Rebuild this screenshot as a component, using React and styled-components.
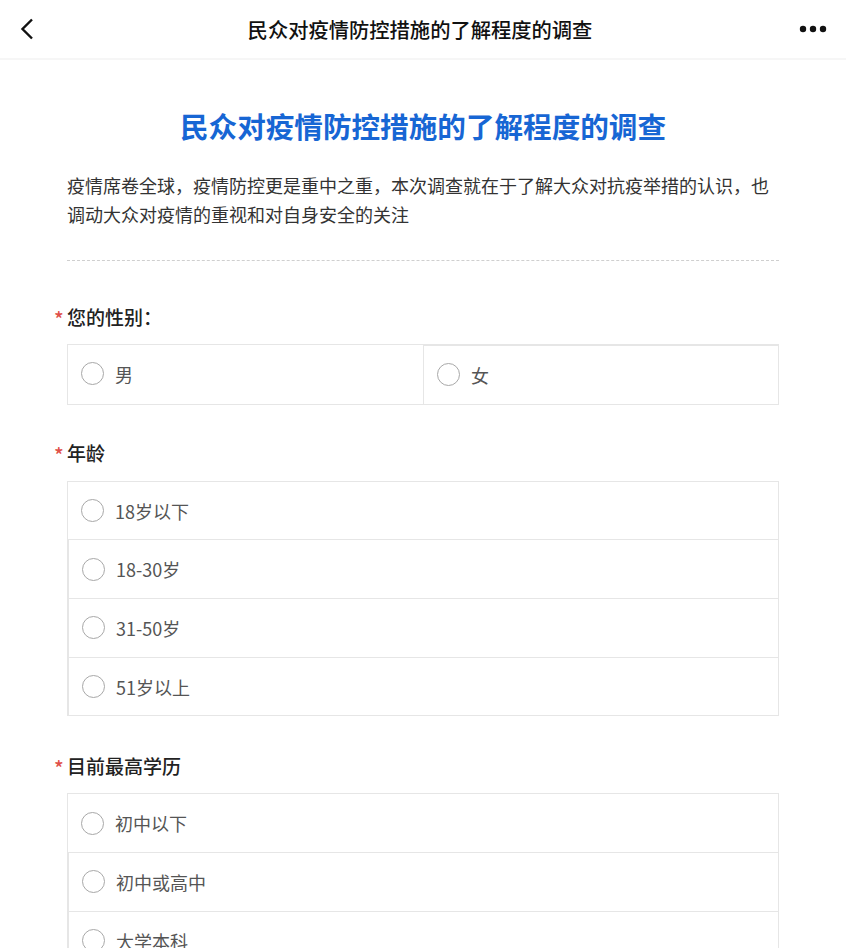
import React from "react";
import styled, { createGlobalStyle } from "styled-components";

const GlobalStyle = createGlobalStyle`
  body {
    margin: 0;
    background: #fff;
    font-family: "Noto Sans CJK SC", "Noto Sans", sans-serif;
  }
`;

const Header = styled.header`
  height: 60px;
  display: flex;
  align-items: center;
  justify-content: space-between;
  padding: 0 18px 0 12px;
  border-bottom: 2px solid #f6f6f6;
  box-sizing: border-box;
`;

const HeaderTitle = styled.h1`
  margin: 0;
  font-size: 20.3px;
  font-weight: 500;
  color: #111;
`;

const IconBtn = styled.div`
  width: 30px;
  height: 30px;
  display: flex;
  align-items: center;
  justify-content: center;
`;

const Main = styled.main`
  padding: 0 67px 40px;
`;

const Title = styled.h2`
  margin: 46px 0 0;
  text-align: center;
  font-size: 28.6px;
  line-height: 40px;
  font-weight: 700;
  color: #1766d4;
`;

const Desc = styled.p`
  margin: 25px 0 0;
  font-size: 18px;
  line-height: 29px;
  color: #333;
`;

const Divider = styled.hr`
  margin: 31px 0 0;
  border: none;
  border-top: 1px dashed #cfcfcf;
`;

const Question = styled.section`
  margin-top: ${(p) => p.$gap}px;
`;

const Label = styled.div`
  display: flex;
  align-items: center;
  height: 28px;
  font-size: 19px;
  font-weight: 500;
  color: #222;
  margin-left: -13px;
  margin-bottom: 14px;
`;

const Star = styled.span`
  color: #e0504a;
  font-size: 20px;
  line-height: 1;
  width: 13px;
  padding-top: 5px;
`;

const Options = styled.div`
  border: 1px solid #e6e6e6;
  display: grid;
  grid-template-columns: ${(p) => (p.$cols === 2 ? "1fr 1fr" : "1fr")};
`;

const Option = styled.label`
  height: 57.7px;
  display: flex;
  align-items: center;
  padding-left: 13px;
  gap: 11px;
  font-size: 18px;
  color: #555;
  & + & {
    ${(p) =>
      p.$cols === 2
        ? "border-left: 1px solid #e6e6e6;"
        : "border-top: 1px solid #e6e6e6;"}
  }
`;

const Radio = styled.span`
  width: 21px;
  height: 21px;
  border-radius: 50%;
  border: 1.5px solid #a8a8a8;
  flex-shrink: 0;
`;

const questions = [
  { label: "您的性别：", cols: 2, gap: 41, options: ["男", "女"] },
  { label: "年龄", cols: 1, gap: 34, options: ["18岁以下", "18-30岁", "31-50岁", "51岁以上"] },
  { label: "目前最高学历", cols: 1, gap: 35, options: ["初中以下", "初中或高中", "大学本科", "研究生及以上"] },
];

export default function App() {
  return (
    <>
      <GlobalStyle />
      <Header>
        <IconBtn>
          <svg width="14" height="22" viewBox="0 0 14 22">
            <path d="M12 1.5 L2.5 11 L12 20.5" fill="none" stroke="#111" strokeWidth="2.4" />
          </svg>
        </IconBtn>
        <HeaderTitle>民众对疫情防控措施的了解程度的调查</HeaderTitle>
        <IconBtn>
          <svg width="28" height="8" viewBox="0 0 28 8">
            <circle cx="4" cy="4" r="3.2" fill="#111" />
            <circle cx="14" cy="4" r="3.2" fill="#111" />
            <circle cx="24" cy="4" r="3.2" fill="#111" />
          </svg>
        </IconBtn>
      </Header>
      <Main>
        <Title>民众对疫情防控措施的了解程度的调查</Title>
        <Desc>
          疫情席卷全球，疫情防控更是重中之重，本次调查就在于了解大众对抗疫举措的认识，也调动大众对疫情的重视和对自身安全的关注
        </Desc>
        <Divider />
        {questions.map((q) => (
          <Question key={q.label} $gap={q.gap}>
            <Label>
              <Star>*</Star>
              {q.label}
            </Label>
            <Options $cols={q.cols}>
              {q.options.map((o) => (
                <Option key={o} $cols={q.cols}>
                  <Radio />
                  {o}
                </Option>
              ))}
            </Options>
          </Question>
        ))}
      </Main>
    </>
  );
}
